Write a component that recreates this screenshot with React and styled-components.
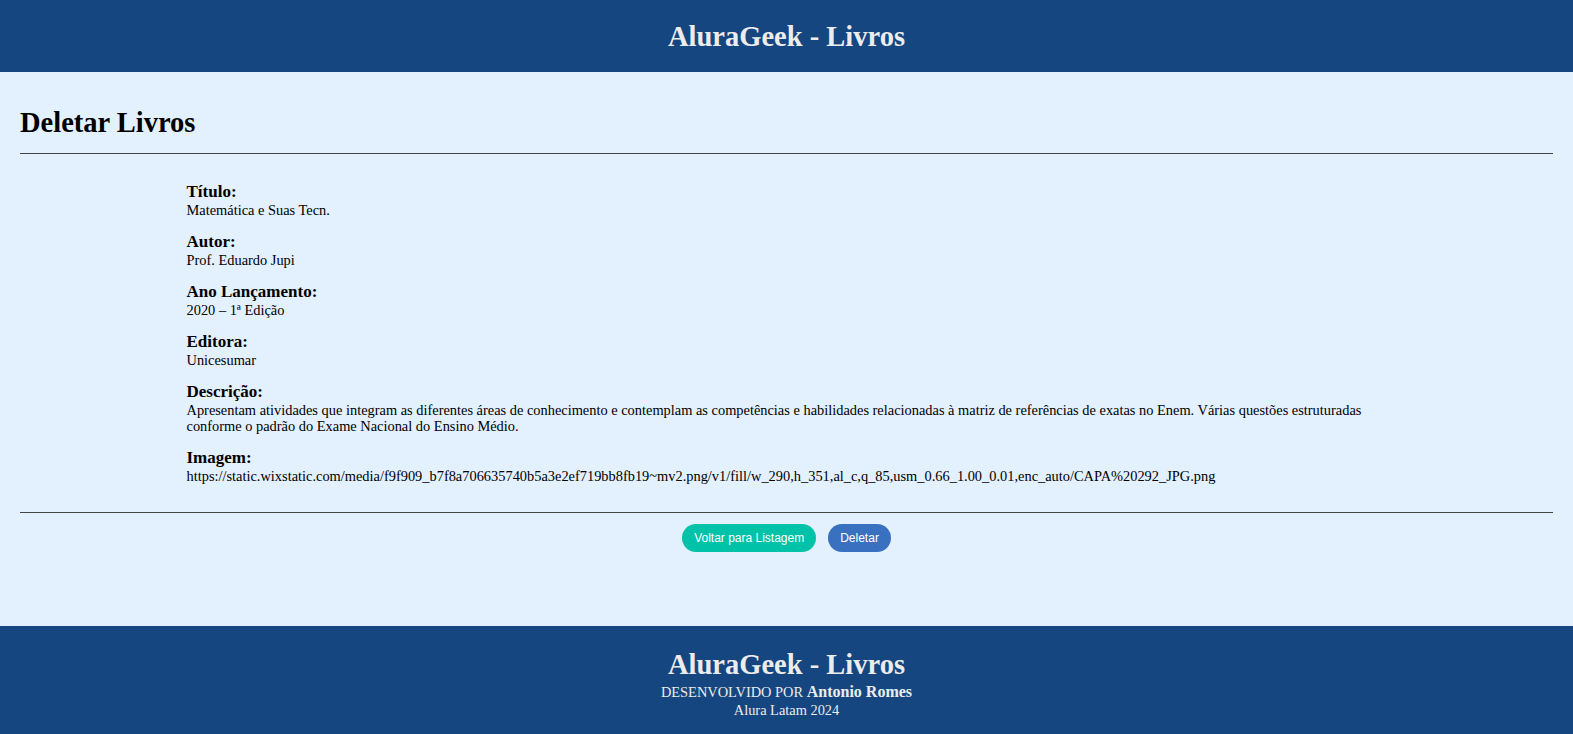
import styled, { createGlobalStyle } from "styled-components"

const GlobalStyle = createGlobalStyle`
    html, body {
        margin:0;
        padding:0;
        background-color:#e3f0fe;
        font-family:"Liberation Serif", "Times New Roman", serif;
        color:#000;
    }
`
const Header = styled.header`
    background-color:#154680;
    height:72px;
    display:flex;
    align-items:center;
    justify-content:center;
`
const Brand = styled.h1`
    margin:0;
    padding-top:2px;
    color:#ececec;
    font-size:28.5px;
    font-weight:bold;
`
const Main = styled.main`
    padding:31px 20px 0;
    height:554px;
    box-sizing:border-box;
`
const PageTitle = styled.h2`
    margin:0 0 10px;
    font-size:28.5px;
    line-height:40px;
`
const Divider = styled.hr`
    margin:0;
    border:none;
    border-top:1px solid #444;
`
const Details = styled.dl`
    width:1200px;
    margin:0 auto;
    padding:28px 0 28px;
    display:flex;
    flex-direction:column;
    gap:14px;
`
const Field = styled.div`
    display:flex;
    flex-direction:column;
`
const Label = styled.dt`
    font-size:17px;
    font-weight:bold;
    line-height:20px;
`
const Value = styled.dd`
    margin:0;
    font-size:14.4px;
    line-height:16px;
    overflow-wrap:anywhere;
`
const Actions = styled.div`
    display:flex;
    justify-content:center;
    gap:12px;
    padding-top:11px;
`
const Button = styled.button`
    border:none;
    height:28px;
    padding:0 12px;
    border-radius:14px;
    background-color:${props => props.color};
    color:#fff;
    font-family:"Liberation Sans", Arial, sans-serif;
    font-size:12px;
    cursor:pointer;
`
const Footer = styled.footer`
    background-color:#154680;
    height:110px;
    padding-top:21px;
    box-sizing:border-box;
    display:flex;
    flex-direction:column;
    align-items:center;
    color:#ececec;
`
const FooterBrand = styled.h2`
    margin:0;
    font-size:28.5px;
    line-height:36px;
`
const FooterLine = styled.p`
    margin:0;
    font-size:14.4px;
    line-height:18px;
    b{
        font-size:16px;
    }
`

const fields = [
    { label: "Título:", value: "Matemática e Suas Tecn." },
    { label: "Autor:", value: "Prof. Eduardo Jupi" },
    { label: "Ano Lançamento:", value: "2020 – 1ª Edição" },
    { label: "Editora:", value: "Unicesumar" },
    { label: "Descrição:", value: "Apresentam atividades que integram as diferentes áreas de conhecimento e contemplam as competências e habilidades relacionadas à matriz de referências de exatas no Enem. Várias questões estruturadas conforme o padrão do Exame Nacional do Ensino Médio." },
    { label: "Imagem:", value: "https://static.wixstatic.com/media/f9f909_b7f8a706635740b5a3e2ef719bb8fb19~mv2.png/v1/fill/w_290,h_351,al_c,q_85,usm_0.66_1.00_0.01,enc_auto/CAPA%20292_JPG.png" },
]

const App = () => {
    return (
        <>
            <GlobalStyle />
            <Header>
                <Brand>AluraGeek - Livros</Brand>
            </Header>
            <Main>
                <PageTitle>Deletar Livros</PageTitle>
                <Divider />
                <Details>
                    {fields.map(f => (
                        <Field key={f.label}>
                            <Label>{f.label}</Label>
                            <Value>{f.value}</Value>
                        </Field>
                    ))}
                </Details>
                <Divider />
                <Actions>
                    <Button color="#00c2a8">Voltar para Listagem</Button>
                    <Button color="#3a70c0">Deletar</Button>
                </Actions>
            </Main>
            <Footer>
                <FooterBrand>AluraGeek - Livros</FooterBrand>
                <FooterLine>DESENVOLVIDO POR <b>Antonio Romes</b></FooterLine>
                <FooterLine>Alura Latam 2024</FooterLine>
            </Footer>
        </>
    )
}

export default App
